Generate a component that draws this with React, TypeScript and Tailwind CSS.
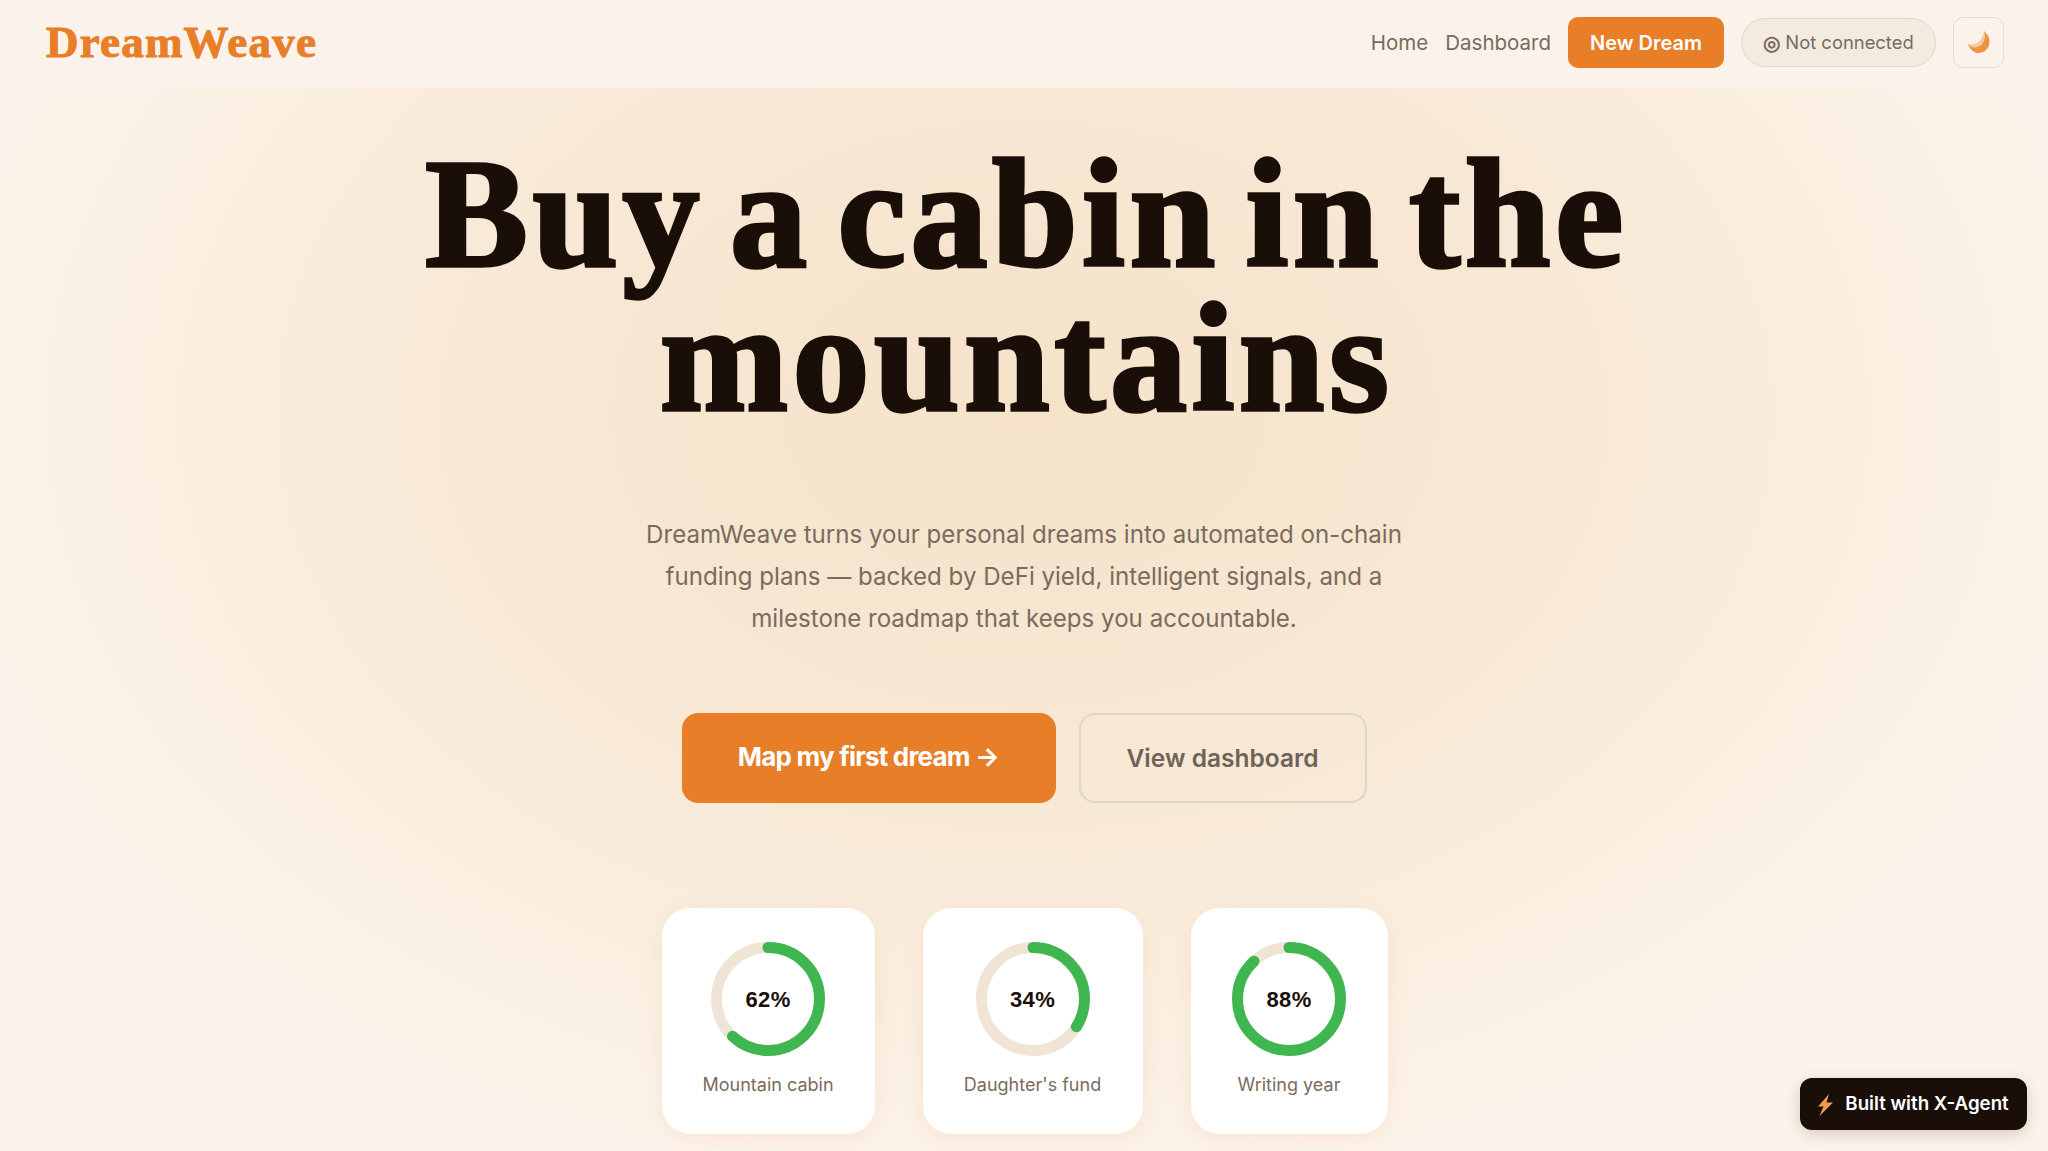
import React from "react";

function Ring({ pct, label, width }: { pct: number; label: string; width: string }) {
  const r = 51.5;
  const c = 2 * Math.PI * r;
  return (
    <div className={`flex flex-col items-center rounded-[28px] bg-white pt-[34px] h-[226px] shadow-[0_4px_18px_rgba(232,126,39,0.10)] ${width}`}>
      <div className="relative w-[114px] h-[114px]">
        <svg width="114" height="114" viewBox="0 0 114 114" className="-rotate-90">
          <circle cx="57" cy="57" r={r} fill="none" stroke="#efe4d6" strokeWidth="11" />
          <circle cx="57" cy="57" r={r} fill="none" stroke="#3fb650" strokeWidth="11" strokeLinecap="round" strokeDasharray={`${(c * pct) / 100} ${c}`} />
        </svg>
        <div className="absolute inset-0 flex items-center justify-center text-[22px] font-bold text-[#1a0f08] font-['Liberation_Sans',sans-serif] tracking-[0.4px]">{pct}%</div>
      </div>
      <div className="mt-[15px] text-[18px] leading-[28px] text-[#7a6b5d]">{label}</div>
    </div>
  );
}

export default function App() {
  return (
    <div className="relative h-screen overflow-hidden font-['Inter',sans-serif] bg-[radial-gradient(ellipse_1150px_820px_at_50%_36%,#f5e2c9_0%,#f8e9d6_50%,#fcf4ec_100%)]">
      <header className="flex h-[88px] items-center justify-between bg-[#fbf3eb] pb-[3px] pl-[46px] pr-[44px]">
        <div className="font-['Liberation_Serif',serif] text-[45px] font-bold leading-none tracking-[1.2px] text-[#e87e27] [-webkit-text-stroke:1px_#e87e27]">DreamWeave</div>
        <nav className="flex items-center">
          <a className="pt-[2px] text-[20.5px] text-[#7a6b5d]">Home</a>
          <a className="ml-[17px] pt-[2px] text-[20.5px] text-[#7a6b5d]">Dashboard</a>
          <button className="ml-[17px] flex h-[51px] w-[156px] items-center justify-center rounded-[10px] bg-[#e87e27] text-[20px] font-semibold text-white">New Dream</button>
          <div className="ml-[17px] flex h-[49px] w-[195px] items-center justify-center gap-[5px] rounded-full border-[1.5px] border-[#e3d6c3] bg-[#f3ebdf] text-[18.4px] text-[#7a6b5d]">
            <span className="text-[20px] font-semibold leading-none">◎</span>
            <span>Not connected</span>
          </div>
          <button className="ml-[17px] flex h-[51px] w-[51px] items-center justify-center rounded-[10px] border-[1.5px] border-[#e8dccb]">
            <svg width="22" height="23" viewBox="0 0 22 23">
              <path d="M16 0 C23 6 24 16 15 21 C8 24.5 2 19 0 13 C6 17 18 13 16 0 Z" fill="#ee9440" />
              <path d="M16 0 C19 8 15 15 8 16.5 C5 17 2 15.5 0 13 C6 15 15 11 16 0 Z" fill="#f6c9a0" />
            </svg>
          </button>
        </nav>
      </header>

      <main className="flex flex-col items-center">
        <h1 className="ml-[5px] mt-[54px] w-[1300px] text-center font-['Liberation_Serif',serif] text-[154px] font-bold leading-[144px] tracking-[4.5px] [word-spacing:-17px] text-[#1a0f08] [-webkit-text-stroke:3.5px_#1a0f08]">
          Buy a cabin in the mountains
        </h1>
        <p className="mt-[84px] w-[800px] text-center text-[24.1px] leading-[42px] text-[#7a6b5d]">
          DreamWeave turns your personal dreams into automated on-chain funding plans — backed by DeFi yield, intelligent signals, and a milestone roadmap that keeps you accountable.
        </p>
        <div className="mt-[73px] flex items-center gap-[23px]">
          <button className="flex h-[90px] w-[374px] items-center justify-center rounded-[16px] bg-[#e87e27] pb-[3px] text-[26px] font-bold tracking-[-0.8px] text-white">Map my first dream →</button>
          <button className="flex h-[90px] w-[288px] items-center justify-center rounded-[16px] border-2 border-[#e0d6c8] text-[24.5px] font-semibold text-[#6e6259]">View dashboard</button>
        </div>
        <div className="ml-[1px] mt-[105px] flex gap-[48px]">
          <Ring pct={62} label="Mountain cabin" width="w-[213px]" />
          <Ring pct={34} label="Daughter's fund" width="w-[220px]" />
          <Ring pct={88} label="Writing year" width="w-[197px]" />
        </div>
      </main>

      <div className="absolute bottom-[21px] right-[21px] flex h-[52px] w-[227px] items-center justify-center gap-[12px] rounded-[12px] bg-[#1a0f08] pt-[1px] text-[18.7px] font-semibold text-white shadow-[0_4px_16px_rgba(120,80,40,0.25)]">
        <svg width="15" height="22" viewBox="0 0 15 22">
          <path d="M11 0 L0 12.5 H5.5 L1.5 22 L15 8.5 H8.5 Z" fill="#f2994a" />
        </svg>
        <span>Built with X-Agent</span>
      </div>
    </div>
  );
}
